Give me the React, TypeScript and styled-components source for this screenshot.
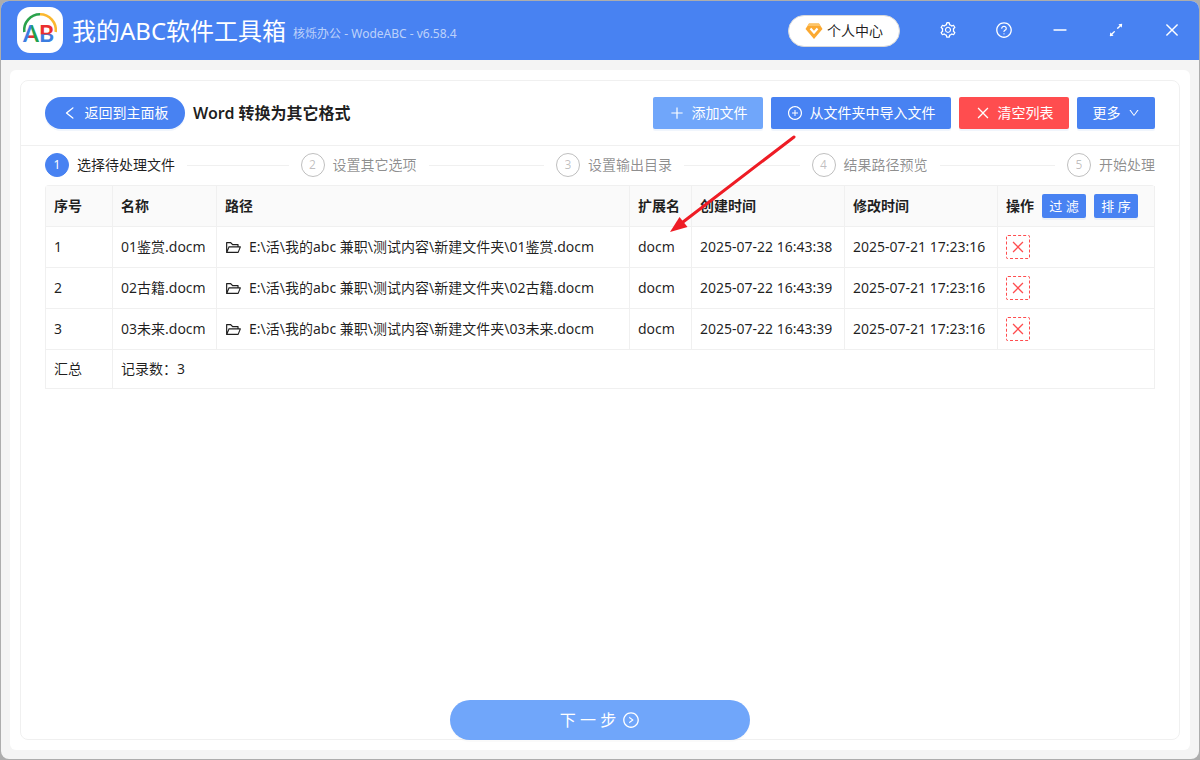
import React from "react";
import styled, { createGlobalStyle, css } from "styled-components";
import {
  AiOutlineArrowsAlt,
  AiOutlineClose,
  AiOutlineDown,
  AiOutlineFolderOpen,
  AiOutlineLeft,
  AiOutlineMinus,
  AiOutlinePlus,
  AiOutlinePlusCircle,
  AiOutlineQuestionCircle,
  AiOutlineRightCircle,
  AiOutlineSetting,
} from "react-icons/ai";

const primary = "#4882f2";
const primarySoft = "#70a6fa";
const danger = "#ff4d4f";
const line = "#f0f0f0";

const GlobalStyle = createGlobalStyle`
  *, *::before, *::after { box-sizing: border-box; }
  body {
    margin: 0;
    background: #adadad;
    color: rgba(0, 0, 0, 0.88);
    font: 14px/22px "Noto Sans", "Noto Sans CJK SC", sans-serif;
  }
  button { font: inherit; border: 0; padding: 0; cursor: pointer; }
  svg { display: block; flex: none; }
`;

const Desktop = styled.div`
  display: flex;
  min-height: 100vh;
  padding: 1px;
`;

const Window = styled.div`
  flex: 1;
  min-width: 0;
  display: flex;
  flex-direction: column;
  overflow: hidden;
  border-radius: 8px;
  background: #f4f4f4;
`;

const TitleBar = styled.header`
  display: flex;
  align-items: center;
  height: 59px;
  padding: 0 7px 1px 16px;
  background: ${primary};
  color: #fff;
`;

const AppName = styled.h1`
  margin: 2px 0 0 9px;
  font-size: 24px;
  line-height: 32px;
  font-weight: 400;
  white-space: nowrap;
`;

const Version = styled.span`
  margin: 8px auto 0 7px;
  font-size: 12px;
  line-height: 20px;
  color: rgba(255, 255, 255, 0.65);
  white-space: nowrap;
`;

const AccountButton = styled.button`
  display: flex;
  align-items: center;
  justify-content: center;
  gap: 4px;
  width: 112px;
  height: 32px;
  margin: 2px 28px 0 0;
  border: 1px solid #d9d9d9;
  border-radius: 16px;
  background: #fff;
  color: rgba(0, 0, 0, 0.88);
`;

const WindowControls = styled.nav`
  display: flex;
  gap: 16px;
`;

const ControlButton = styled.button`
  display: flex;
  align-items: center;
  justify-content: center;
  width: 40px;
  height: 40px;
  background: none;
  color: #fff;
`;

const Body = styled.main`
  flex: 1;
  display: flex;
  flex-direction: column;
  margin: 10px 9px 9px;
  padding: 10px;
  border-radius: 6px;
  background: #fff;
`;

const Card = styled.section`
  position: relative;
  flex: 1;
  display: flex;
  flex-direction: column;
  border: 1px solid ${line};
  border-radius: 8px;
`;

const CardHead = styled.div`
  display: flex;
  align-items: center;
  gap: 8px;
  height: 65px;
  padding: 0 24px;
  border-bottom: 1px solid ${line};
`;

const CardTitle = styled.h2`
  flex: 1;
  margin: 0;
  font-size: 16px;
  line-height: 24px;
  font-weight: 600;
  white-space: nowrap;
`;

type Tone = "primary" | "soft" | "danger";
const tones: Record<Tone, string> = { primary, soft: primarySoft, danger };

const ActionButton = styled.button<{ $tone?: Tone; $width: number; $round?: boolean }>`
  display: flex;
  align-items: center;
  justify-content: center;
  gap: 7px;
  width: ${(p) => p.$width}px;
  height: 32px;
  border-radius: ${(p) => (p.$round ? 16 : 2)}px;
  background: ${(p) => tones[p.$tone ?? "primary"]};
  box-shadow: 0 2px 0 rgba(5, 80, 200, 0.06);
  color: #fff;
  white-space: nowrap;
`;

const Steps = styled.ol`
  display: flex;
  margin: 0;
  padding: 7px 24px 8px;
  list-style: none;
`;

const Step = styled.li<{ $active?: boolean }>`
  display: flex;
  align-items: center;
  gap: 8px;
  color: ${(p) => (p.$active ? "rgba(0,0,0,.88)" : "rgba(0,0,0,.45)")};
  white-space: nowrap;

  &:not(:last-child) {
    flex: 1;
    padding-right: 12px;
  }
  &:not(:last-child)::after {
    content: "";
    flex: 1;
    height: 1px;
    margin-left: 4px;
    background: ${line};
  }
`;

const StepNumber = styled.span<{ $active?: boolean }>`
  display: flex;
  align-items: center;
  justify-content: center;
  width: 24px;
  height: 24px;
  border: 1px solid rgba(0, 0, 0, 0.25);
  border-radius: 50%;
  font-size: 12px;
  color: rgba(0, 0, 0, 0.25);
  ${(p) =>
    p.$active &&
    css`
      border-color: ${primary};
      background: ${primary};
      color: #fff;
    `}
`;

const TableWrap = styled.div`
  padding: 0 24px;
`;

const Table = styled.table`
  width: 100%;
  table-layout: fixed;
  border-collapse: separate;
  border-spacing: 0;
  border-top: 1px solid ${line};
  border-left: 1px solid ${line};
  border-radius: 4px 4px 0 0;
`;

const cell = css`
  height: 41px;
  padding: 0 8px;
  border-right: 1px solid ${line};
  border-bottom: 1px solid ${line};
  text-align: left;
  white-space: nowrap;
`;

const HeadCell = styled.th`
  ${cell}
  background: #fafafa;
  font-weight: 600;
`;

const Cell = styled.td`
  ${cell}
`;

const FootCell = styled.td`
  ${cell}
  height: 39px;
`;

const Inline = styled.div<{ $gap: number }>`
  display: flex;
  align-items: center;
  gap: ${(p) => p.$gap}px;
`;

const SmallButton = styled.button`
  width: 44px;
  height: 24px;
  border-radius: 2px;
  background: ${primary};
  box-shadow: 0 2px 0 rgba(5, 80, 200, 0.06);
  color: #fff;
  font-size: 13px;
  font-weight: 400;
`;

const RemoveButton = styled.button`
  display: flex;
  align-items: center;
  justify-content: center;
  width: 24px;
  height: 24px;
  border: 1px dashed ${danger};
  border-radius: 2px;
  background: #fff;
  color: ${danger};
`;

const NextButton = styled.button`
  display: flex;
  align-items: center;
  justify-content: center;
  gap: 6px;
  width: 300px;
  height: 40px;
  margin: auto auto -1px;
  border-radius: 20px;
  background: ${primarySoft};
  box-shadow: 0 2px 0 rgba(0, 0, 0, 0.02);
  color: #fff;
  font-size: 16px;
  line-height: 24px;
`;

const Pointer = styled.svg`
  position: absolute;
  top: 54px;
  right: 382px;
  pointer-events: none;
`;

function Logo() {
  return (
    <svg width="46" height="46" viewBox="0 0 46 46" aria-hidden="true">
      <defs>
        <linearGradient id="letterA" x1="0" x2="1" y1="0" y2="0">
          <stop offset="0.5" stopColor="#3b7de0" />
          <stop offset="0.55" stopColor="#20a04e" />
        </linearGradient>
        <linearGradient id="letterB" x1="0" x2="0" y1="0" y2="1">
          <stop offset="0.52" stopColor="#ea2f2f" />
          <stop offset="0.57" stopColor="#3b7de0" />
        </linearGradient>
      </defs>
      <rect width="46" height="46" rx="13" fill="#fff" />
      <path d="M7.300 25 A15.800 15.800 0 0 1 23 7.300" fill="none" stroke="#2ba24c" strokeWidth="2.600" />
      <path d="M23 7.300 A15.800 15.800 0 0 1 38.700 25" fill="none" stroke="#fbb82f" strokeWidth="2.600" />
      <text x="6" y="35" fontFamily="Lato" fontWeight="700" fontSize="23" fill="url(#letterA)">A</text>
      <rect x="11.500" y="28.500" width="5.500" height="2.400" fill="#ea2f2f" />
      <text x="22" y="35" fontFamily="Lato" fontWeight="700" fontSize="23" fill="url(#letterB)">B</text>
    </svg>
  );
}

function Diamond() {
  return (
    <svg width="18" height="18" viewBox="0 0 18 18" aria-hidden="true">
      <path d="M4 1.500h10L17.500 7 9 17 .5 7z" fill="#fba931" />
      <path d="M4 1.500h10l1.500 2.500h-13z" fill="#fcc468" />
      <path d="M5.500 6.500 9 10.500l3.500-4" fill="none" stroke="#fff" strokeWidth="2.200" />
    </svg>
  );
}

const steps = ["选择待处理文件", "设置其它选项", "设置输出目录", "结果路径预览", "开始处理"];

const files = [
  { name: "01鉴赏.docm", created: "2025-07-22 16:43:38", modified: "2025-07-21 17:23:16" },
  { name: "02古籍.docm", created: "2025-07-22 16:43:39", modified: "2025-07-21 17:23:16" },
  { name: "03未来.docm", created: "2025-07-22 16:43:39", modified: "2025-07-21 17:23:16" },
];

const folder = "E:\\活\\我的abc 兼职\\测试内容\\新建文件夹\\";

export default function App() {
  return (
    <Desktop>
      <GlobalStyle />
      <Window>
        <TitleBar>
          <Logo />
          <AppName>我的ABC软件工具箱</AppName>
          <Version>核烁办公 - WodeABC - v6.58.4</Version>
          <AccountButton>
            <Diamond />
            个人中心
          </AccountButton>
          <WindowControls aria-label="窗口">
            <ControlButton aria-label="设置"><AiOutlineSetting size={18} /></ControlButton>
            <ControlButton aria-label="帮助"><AiOutlineQuestionCircle size={18} /></ControlButton>
            <ControlButton aria-label="最小化"><AiOutlineMinus size={18} /></ControlButton>
            <ControlButton aria-label="最大化"><AiOutlineArrowsAlt size={18} /></ControlButton>
            <ControlButton aria-label="关闭"><AiOutlineClose size={18} /></ControlButton>
          </WindowControls>
        </TitleBar>

        <Body>
          <Card>
            <CardHead>
              <ActionButton $width={140} $round>
                <AiOutlineLeft size={16} />
                返回到主面板
              </ActionButton>
              <CardTitle>Word 转换为其它格式</CardTitle>
              <ActionButton $tone="soft" $width={110}>
                <AiOutlinePlus size={16} />
                添加文件
              </ActionButton>
              <ActionButton $width={180}>
                <AiOutlinePlusCircle size={16} />
                从文件夹中导入文件
              </ActionButton>
              <ActionButton $tone="danger" $width={110}>
                <AiOutlineClose size={16} />
                清空列表
              </ActionButton>
              <ActionButton $width={78}>
                更多
                <AiOutlineDown size={12} />
              </ActionButton>
            </CardHead>

            <Steps>
              {steps.map((label, i) => (
                <Step key={label} $active={i === 0}>
                  <StepNumber $active={i === 0}>{i + 1}</StepNumber>
                  {label}
                </Step>
              ))}
            </Steps>

            <TableWrap>
              <Table>
                <colgroup>
                  <col width="67" />
                  <col width="104" />
                  <col />
                  <col width="62" />
                  <col width="153" />
                  <col width="153" />
                  <col width="157" />
                </colgroup>
                <thead>
                  <tr>
                    <HeadCell>序号</HeadCell>
                    <HeadCell>名称</HeadCell>
                    <HeadCell>路径</HeadCell>
                    <HeadCell>扩展名</HeadCell>
                    <HeadCell>创建时间</HeadCell>
                    <HeadCell>修改时间</HeadCell>
                    <HeadCell>
                      <Inline $gap={8}>
                        操作
                        <SmallButton>过 滤</SmallButton>
                        <SmallButton>排 序</SmallButton>
                      </Inline>
                    </HeadCell>
                  </tr>
                </thead>
                <tbody>
                  {files.map((file, i) => (
                    <tr key={file.name}>
                      <Cell>{i + 1}</Cell>
                      <Cell>{file.name}</Cell>
                      <Cell>
                        <Inline $gap={7}>
                          <AiOutlineFolderOpen size={17} />
                          {folder + file.name}
                        </Inline>
                      </Cell>
                      <Cell>docm</Cell>
                      <Cell>{file.created}</Cell>
                      <Cell>{file.modified}</Cell>
                      <Cell>
                        <RemoveButton aria-label={`移除 ${file.name}`}>
                          <AiOutlineClose size={16} />
                        </RemoveButton>
                      </Cell>
                    </tr>
                  ))}
                </tbody>
                <tfoot>
                  <tr>
                    <FootCell>汇总</FootCell>
                    <FootCell colSpan={6}>记录数：3</FootCell>
                  </tr>
                </tfoot>
              </Table>
            </TableWrap>

            <NextButton>
              下 一 步
              <AiOutlineRightCircle size={18} />
            </NextButton>

            <Pointer width="128" height="100" viewBox="0 0 128 100" aria-hidden="true">
              <path d="M125 2 14 87" stroke="#ee1c25" strokeWidth="3" strokeLinecap="round" />
              <path d="M1 97 10.500 82 18.500 92z" fill="#ee1c25" />
            </Pointer>
          </Card>
        </Body>
      </Window>
    </Desktop>
  );
}
